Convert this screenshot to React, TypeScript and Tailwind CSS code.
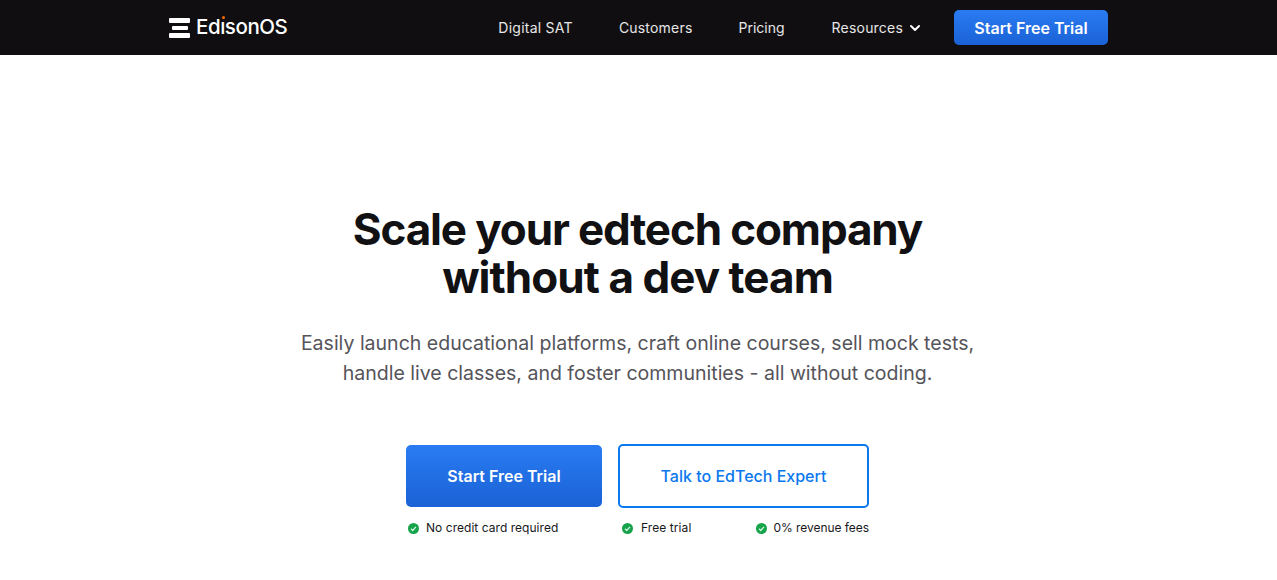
import { ChevronDown } from "lucide-react";

const navigation = ["Digital SAT", "Customers", "Pricing"];

function Check() {
  return (
    <svg viewBox="0 0 20 20" className="w-[11px] h-[11px] shrink-0">
      <circle cx="10" cy="10" r="10" fill="#16a34a" />
      <path d="M5.5 10.5l3 3 6-6.5" fill="none" stroke="#d1fae5" strokeWidth="2.4" />
    </svg>
  );
}

function Logo() {
  return (
    <div className="flex items-center gap-[6px]">
      <div className="flex flex-col w-[21px] h-[20px] justify-between">
        <div className="h-[5px] w-full bg-white rounded-[1px]" />
        <div className="h-[4px] w-[16px] ml-[3px] bg-white rounded-[1px]" />
        <div className="h-[5px] w-full bg-white rounded-[1px]" />
      </div>
      <span className="text-[20.5px] leading-none text-white tracking-[-0.45px] font-medium">
        Ed
        <span className="relative">
          ı
          <span className="absolute left-[1.5px] top-[2px] w-[3px] h-[3px] rounded-full bg-orange-500" />
        </span>
        sonOS
      </span>
    </div>
  );
}

export default function App() {
  return (
    <div className="w-[1277px] h-[580px] overflow-hidden bg-white font-['Inter',sans-serif]">
      <nav className="h-[55px] bg-[#100e10] flex items-center justify-between pl-[169px] pr-[169px]">
        <Logo />
        <div className="flex items-center">
          <a href="#" className="text-sm tracking-[0.25px] text-white/90 mr-[46px]">
            {navigation[0]}
          </a>
          <a href="#" className="text-sm tracking-[0.2px] text-white/90 mr-[46px]">
            {navigation[1]}
          </a>
          <a href="#" className="text-sm text-white/90 mr-[47px]">
            {navigation[2]}
          </a>
          <a href="#" className="flex items-center text-sm tracking-[0.2px] text-white/90 mr-[31px]">
            Resources
            <ChevronDown className="w-4 h-4 ml-[4px] text-white" strokeWidth={3} />
          </a>
          <button className="w-[154px] h-[35px] rounded-[5px] bg-gradient-to-b from-[#2a7bf2] to-[#1a62d6] text-white text-base font-semibold">
            Start Free Trial
          </button>
        </div>
      </nav>

      <main className="flex flex-col items-center pt-[150px]">
        <h1 className="mr-[2px] text-[44px] leading-[48px] font-bold text-[#111113] text-center tracking-[-1.13px]">
          Scale your edtech company
          <br />
          <span className="tracking-[-0.95px]">without a dev team</span>
        </h1>
        <p className="mt-[27px] mr-[2px] text-[19.53px] leading-[30px] text-[#55545a] text-center">
          Easily launch educational platforms, craft online courses, sell mock tests,
          <br />
          handle live classes, and foster communities - all without coding.
        </p>

        <div className="mt-[57px] mr-[2px] flex gap-[16px]">
          <div className="w-[196px]">
            <button className="w-full h-[62px] rounded-[5px] bg-gradient-to-b from-[#2a7bf2] to-[#1a62d6] text-white text-base font-semibold">
              Start Free Trial
            </button>
            <div className="mt-[13px] ml-[2px] flex items-center gap-[7px] text-xs tracking-[0.04px] text-[#18181b]">
              <Check />
              No credit card required
            </div>
          </div>
          <div className="w-[251px]">
            <button className="w-full h-[64px] -mt-[1px] rounded-[5px] border-2 border-[#0b78ee] bg-white text-[#0b78ee] text-base font-medium">
              Talk to EdTech Expert
            </button>
            <div className="mt-[12px] ml-[4px] flex items-center justify-between text-xs text-[#18181b]">
              <div className="flex items-center gap-[8px] tracking-[0.08px]">
                <Check />
                Free trial
              </div>
              <div className="flex items-center gap-[6px] tracking-[-0.05px]">
                <Check />
                0% revenue fees
              </div>
            </div>
          </div>
        </div>
      </main>
    </div>
  );
}
